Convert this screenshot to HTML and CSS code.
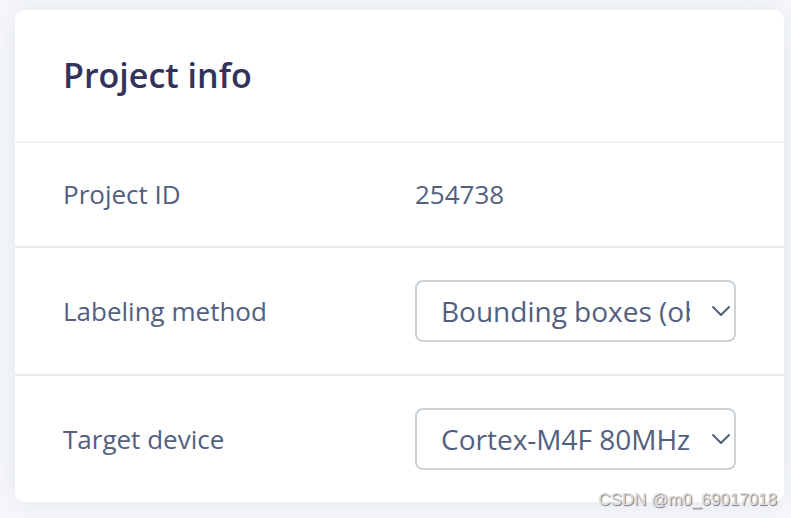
FILE: index.html
```html
<!DOCTYPE html>
<html lang="en">
<head>
<meta charset="utf-8">
<title>Project info</title>
<link rel="stylesheet" href="styles.css">
</head>
<body>
<main class="card">
  <header class="card-header">
    <h2 class="card-title">Project info</h2>
  </header>
  <div class="row">
    <span class="label">Project ID</span>
    <span class="value">254738</span>
  </div>
  <div class="row">
    <label class="label" for="labeling">Labeling method</label>
    <div class="select-wrap">
      <select class="select" id="labeling">
        <option>Bounding boxes (object detection)</option>
        <option>One label per data item</option>
      </select>
      <svg class="chevron" viewBox="0 0 20 12" aria-hidden="true"><path d="M2 2l8 8 8-8"/></svg>
    </div>
  </div>
  <div class="row">
    <label class="label" for="device">Target device</label>
    <div class="select-wrap">
      <select class="select" id="device">
        <option>Cortex-M4F 80MHz</option>
        <option>Cortex-M7 216MHz</option>
      </select>
      <svg class="chevron" viewBox="0 0 20 12" aria-hidden="true"><path d="M2 2l8 8 8-8"/></svg>
    </div>
  </div>
</main>
<div class="watermark">CSDN @m0_69017018</div>
</body>
</html>
```
FILE: styles.css
```css
* {
  box-sizing: border-box;
}

body {
  margin: 0;
  padding: 10px 7px 16px 15px;
  background: #f6f8fc;
  color: #525f7f;
  font: 26px/39px "Open Sans", sans-serif;
}

.card {
  background: #fff;
  border-radius: 10px;
  box-shadow: 0 0 32px rgba(130, 135, 150, 0.16);
}

.card-header {
  padding: 40px 48px;
  border-bottom: 2px solid #f2f2f2;
}

.card-title {
  margin: 0;
  color: #32325d;
  font-size: 34px;
  font-weight: 600;
  line-height: 51px;
}

.row {
  display: grid;
  grid-template-columns: 352fr 321fr;
  align-items: center;
  padding: 32px 48px;
  border-bottom: 2px solid #e9ecef;
}

.row:last-child {
  border-bottom: 0;
}

.select-wrap {
  position: relative;
  min-width: 0;
}

.select {
  display: block;
  width: 100%;
  height: 62px;
  padding: 0 44px 0 24px;
  appearance: none;
  background: #fff;
  border: 2px solid #cad1d7;
  border-radius: 8px;
  color: #525f7f;
  font: 28px/42px "Open Sans", sans-serif;
}

.chevron {
  position: absolute;
  top: 25px;
  right: 5px;
  width: 20px;
  height: 12px;
  fill: none;
  stroke: #525f7f;
  stroke-width: 2;
  stroke-linecap: round;
  stroke-linejoin: round;
  pointer-events: none;
}

.watermark {
  position: absolute;
  right: 14px;
  bottom: 8px;
  color: #dcdcdc;
  font: 17px/20px "Liberation Sans", sans-serif;
  text-shadow: 1px 1px 1px #777;
}
```
